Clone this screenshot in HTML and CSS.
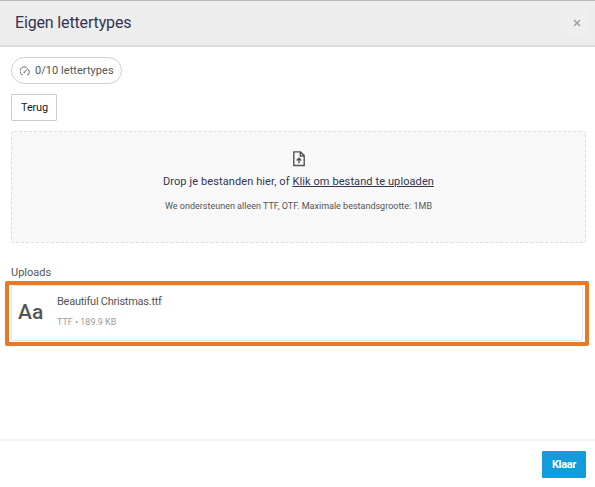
FILE: index.html
```html
<!DOCTYPE html>
<html lang="nl">
<head>
    <meta charset="UTF-8">
    <meta name="viewport" content="width=device-width, initial-scale=1.0">
    <title>Eigen lettertypes</title>
    <link rel="stylesheet" href="styles.css">
</head>
<body>
    <div class="modal">
        <header class="modal-header">
            <h2><span>Eigen lettertypes</span></h2>
            <button type="button" class="btn-close" aria-label="Sluiten">
                <svg width="8" height="8" viewBox="0 0 8 8"><path d="M1 1l6 6M7 1L1 7"/></svg>
            </button>
        </header>
        <main class="modal-body">
            <div class="counter">
                <svg width="10" height="10" viewBox="0 0 10 10"><path d="M2.9 8.7H1.9A4 4 0 0 1 6.6 1.6M8.6 3.6A4 4 0 0 1 8.1 8.7H7.1M4.2 6.3L8 2.5"/><circle cx="4.2" cy="6.2" r=".4"/></svg>
                <span>0/10 lettertypes</span>
            </div>
            <button type="button" class="btn-back"><span>Terug</span></button>
            <div class="dropzone">
                <svg width="12" height="16" viewBox="0 0 12 16"><path d="M1.5 .9H7.5L11.2 4.6V14.5H.8V.9H1.5M7.3 1.2V5H11"/><path d="M6 12.2V7.4M3.7 9.5L6 7.2L8.3 9.5"/></svg>
                <p class="drop-text"><span>Drop je bestanden hier, of <a href="#">Klik om bestand te uploaden</a></span></p>
                <p class="drop-hint"><span>We ondersteunen alleen TTF, OTF. Maximale bestandsgrootte: 1MB</span></p>
            </div>
            <h3><span>Uploads</span></h3>
            <div class="highlight">
                <div class="font-card">
                    <div class="font-preview"><span>Aa</span></div>
                    <div class="font-info">
                        <p class="font-name"><span>Beautiful Christmas.ttf</span></p>
                        <p class="font-meta"><span>TTF • 189.9 KB</span></p>
                    </div>
                </div>
            </div>
        </main>
        <footer class="modal-footer">
            <button type="button" class="btn-done"><span>Klaar</span></button>
        </footer>
    </div>
</body>
</html>
```

FILE: styles.css
```css
* {
    box-sizing: border-box;
}
body {
    margin: 0;
    font-family: Roboto, "Liberation Sans", sans-serif;
    background: #fff;
    color: #555;
}
h2, h3, p {
    margin: 0;
    font-weight: 400;
    white-space: nowrap;
}
button {
    font-family: inherit;
    padding: 0;
    cursor: pointer;
}
svg {
    fill: none;
    stroke: #555;
    flex-shrink: 0;
}
.modal {
    display: flex;
    flex-direction: column;
    height: 487px;
}
.modal-header {
    display: flex;
    justify-content: space-between;
    align-items: center;
    height: 47px;
    padding: 0 7px 1px 15px;
    background: #ededed;
    border-top: 1px solid #b9b9b9;
    border-bottom: 2px solid #dcdcdc;
}
.modal-header h2 {
    font-size: 16px;
    line-height: 20px;
    letter-spacing: -0.15px;
    color: #333552;
}
.btn-close {
    display: flex;
    justify-content: center;
    align-items: center;
    width: 20px;
    height: 25px;
    margin-right: 1px;
    background: #efefef;
    border: none;
}
.btn-close svg {
    stroke: #a0a0a0;
    stroke-width: 1.5;
}
.modal-body {
    flex: 1;
    padding: 10px 9px 0 11px;
}
.counter {
    display: flex;
    align-items: center;
    gap: 5px;
    width: 111px;
    height: 27px;
    padding-left: 8px;
    border: 1px solid #cfcfcf;
    border-radius: 14px;
    font-size: 11px;
    letter-spacing: 0.05px;
    white-space: nowrap;
}
.counter svg {
    stroke: #666;
}
.btn-back {
    display: block;
    width: 46px;
    height: 27px;
    margin-top: 10px;
    padding-left: 1px;
    background: #fff;
    border: 1px solid #cbcbcb;
    border-radius: 1px;
    font-size: 11px;
    letter-spacing: -0.2px;
    color: #222;
}
.dropzone {
    display: flex;
    flex-direction: column;
    align-items: center;
    height: 112px;
    margin-top: 10px;
    padding-top: 19px;
    background: #f8f8f8;
    border: 1px dashed #dedede;
    border-radius: 3px;
}
.dropzone svg {
    stroke-width: 1.4;
}
.drop-text {
    margin-top: 7px;
    font-size: 11px;
    line-height: 16px;
    letter-spacing: 0.1px;
    color: #333552;
}
.drop-text a {
    color: inherit;
}
.drop-hint {
    margin-top: 10px;
    font-size: 9px;
    line-height: 12px;
}
.modal-body h3 {
    margin-top: 22px;
    font-size: 11px;
    line-height: 16px;
}
.highlight {
    width: 584px;
    height: 65px;
    margin: 0 0 0 -6px;
    border: 4px solid #eb7823;
    border-radius: 2px;
    padding: 0 2px;
}
.font-card {
    display: flex;
    height: 56px;
    padding-left: 6px;
    border: 1px solid #e3e3e6;
    border-radius: 3px;
}
.font-preview {
    width: 39px;
    padding-top: 13px;
    font-size: 21px;
    line-height: 26px;
    font-weight: 500;
}
.font-name {
    margin-top: 8px;
    font-size: 11px;
    line-height: 16px;
    letter-spacing: -0.25px;
}
.font-meta {
    margin-top: 6px;
    font-size: 9px;
    line-height: 12px;
    color: #9b9b9b;
}
.modal-footer {
    display: flex;
    justify-content: flex-end;
    height: 48px;
    padding: 10px 9px 0;
    border-top: 2px solid #f2f2f2;
}
.btn-done {
    width: 44px;
    height: 27px;
    padding-bottom: 1px;
    background: #129cdb;
    border: none;
    border-radius: 1px;
    font-size: 11px;
    font-weight: 700;
    letter-spacing: -0.3px;
    color: #fff;
}
```
